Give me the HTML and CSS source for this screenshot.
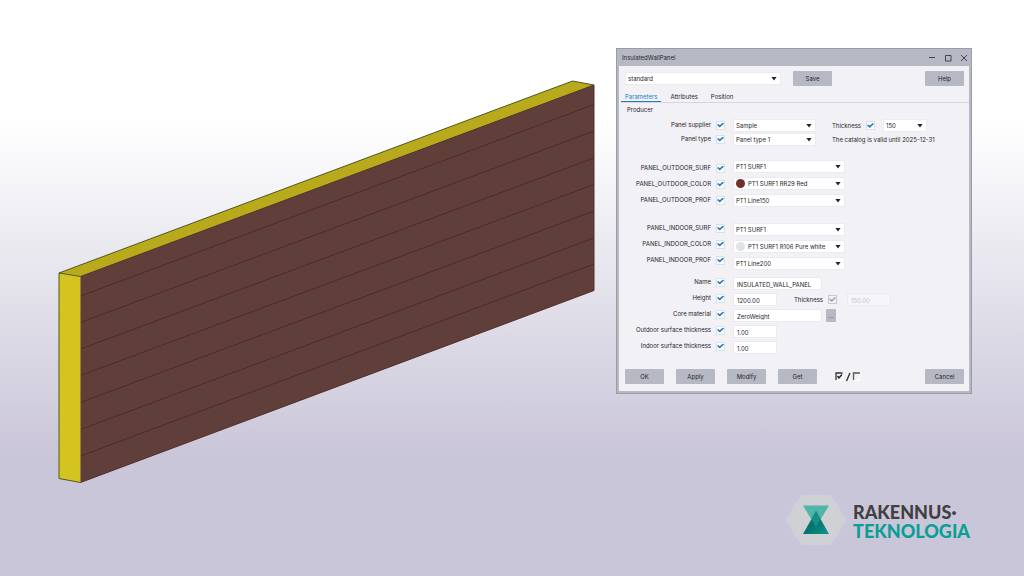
FILE: index.html
```html
<!DOCTYPE html>
<html lang="en">
<head>
<meta charset="utf-8">
<meta name="viewport" content="width=device-width, initial-scale=1">
<title>InsulatedWallPanel</title>
<link rel="stylesheet" href="styles.css">
</head>
<body>
<main class="page">
  <svg class="panel" viewBox="58 80 537 404" role="img" aria-label="Insulated wall panel">
    <path d="M59 273 572.500 81 594 85 80.500 276.500Z" fill="#b9aa1b"/>
    <path d="M59 273 80.500 276.500V482.500L59 478.500Z" fill="#d5c41f"/>
    <path d="M80.500 276.500 594 85V290.500L80.500 482.500Z" fill="#603e39"/>
    <path d="M80.500 296 594 104.500M80.500 322.500 594 131M80.500 349 594 158M80.500 375.500 594 184.500M80.500 402.500 594 211M80.500 429.500 594 238M80.500 456 594 264" fill="none" stroke="#472e2b" stroke-width="1"/>
    <path d="M80.500 482.500 594 290.500V85L80.500 276.500" fill="none" stroke="#54302d" stroke-width="1"/>
    <path d="M80.500 277V482" stroke="#9d7a3c" stroke-width="1"/>
    <path d="M594 85 572.500 81 59 273V478.500L80.500 482.500M59 273 80.500 276.500" fill="none" stroke="#4f5a24" stroke-width="1"/>
  </svg>

  <div class="side">
    <section class="dialog" aria-label="InsulatedWallPanel">
      <header class="titlebar">
        <span>InsulatedWallPanel</span>
        <div class="window-buttons">
          <button type="button" aria-label="Minimize"><svg viewBox="0 0 8 8"><path d="M1 3.500H7"/></svg></button>
          <button type="button" aria-label="Maximize"><svg viewBox="0 0 8 8"><path d="M1.500 1.500H7V7H1.500Z"/></svg></button>
          <button type="button" aria-label="Close"><svg viewBox="0 0 8 8"><path d="M1 1 7 7M7 1 1 7"/></svg></button>
        </div>
      </header>

      <form class="body">
        <div class="toolbar">
          <div class="combo preset"><select aria-label="Preset"><option>standard</option></select></div>
          <button class="btn" type="button">Save</button>
          <button class="btn push" type="button">Help</button>
        </div>

        <nav class="tabs">
          <a class="tab active" href="#parameters">Parameters</a>
          <a class="tab" href="#attributes">Attributes</a>
          <a class="tab" href="#position">Position</a>
        </nav>

        <h2 class="heading">Producer</h2>

        <div class="group producer">
          <div class="keys">
            <label class="key">Panel supplier <input type="checkbox" class="check" checked></label>
            <label class="key">Panel type <input type="checkbox" class="check" checked></label>
          </div>
          <div class="values">
            <div class="line">
              <div class="combo medium"><select aria-label="Panel supplier"><option>Sample</option></select></div>
              <label class="extra">Thickness <input type="checkbox" class="check" checked></label>
              <div class="combo small"><select aria-label="Panel thickness"><option>150</option></select></div>
            </div>
            <div class="line">
              <div class="combo medium"><select aria-label="Panel type"><option>Panel type 1</option></select></div>
              <span class="extra">The catalog is valid until 2025-12-31</span>
            </div>
          </div>
        </div>

        <div class="group outdoor">
          <div class="keys">
            <label class="key">PANEL_OUTDOOR_SURF <input type="checkbox" class="check" checked></label>
            <label class="key">PANEL_OUTDOOR_COLOR <input type="checkbox" class="check" checked></label>
            <label class="key">PANEL_OUTDOOR_PROF <input type="checkbox" class="check" checked></label>
          </div>
          <div class="values">
            <div class="combo large"><select aria-label="Outdoor surface"><option>PT1 SURF1</option></select></div>
            <div class="combo large"><span class="swatch red"></span><select aria-label="Outdoor color"><option>PT1 SURF1 RR29 Red</option></select></div>
            <div class="combo large"><select aria-label="Outdoor profile"><option>PT1 Line150</option></select></div>
          </div>
        </div>

        <div class="group indoor">
          <div class="keys">
            <label class="key">PANEL_INDOOR_SURF <input type="checkbox" class="check" checked></label>
            <label class="key">PANEL_INDOOR_COLOR <input type="checkbox" class="check" checked></label>
            <label class="key">PANEL_INDOOR_PROF <input type="checkbox" class="check" checked></label>
          </div>
          <div class="values">
            <div class="combo large"><select aria-label="Indoor surface"><option>PT1 SURF1</option></select></div>
            <div class="combo large"><span class="swatch white"></span><select aria-label="Indoor color"><option>PT1 SURF1 R106 Pure white</option></select></div>
            <div class="combo large"><select aria-label="Indoor profile"><option>PT1 Line200</option></select></div>
          </div>
        </div>

        <div class="group fields">
          <div class="keys">
            <label class="key">Name <input type="checkbox" class="check" checked></label>
            <label class="key">Height <input type="checkbox" class="check" checked></label>
            <label class="key">Core material <input type="checkbox" class="check" checked></label>
            <label class="key">Outdoor surface thickness <input type="checkbox" class="check" checked></label>
            <label class="key">Indoor surface thickness <input type="checkbox" class="check" checked></label>
          </div>
          <div class="values">
            <input class="text wide" type="text" aria-label="Name" value="INSULATED_WALL_PANEL">
            <div class="line">
              <input class="text" type="text" aria-label="Height" value="1200.00">
              <label class="extra">Thickness <input type="checkbox" class="check" checked disabled></label>
              <input class="text" type="text" aria-label="Thickness" value="150.00" disabled>
            </div>
            <div class="line">
              <input class="text wide" type="text" aria-label="Core material" value="ZeroWeight">
              <button class="btn browse" type="button" aria-label="Browse materials">...</button>
            </div>
            <input class="text" type="text" aria-label="Outdoor surface thickness" value="1.00">
            <input class="text" type="text" aria-label="Indoor surface thickness" value="1.00">
          </div>
        </div>

        <footer class="actions">
          <button class="btn" type="button">OK</button>
          <button class="btn" type="button">Apply</button>
          <button class="btn" type="button">Modify</button>
          <button class="btn" type="button">Get</button>
          <button class="toggle-all" type="button" aria-label="Toggle all">
            <svg viewBox="0 0 26 10">
              <path d="M7.500 1H1V8" fill="none" stroke="#333" stroke-width="1.300"/>
              <path d="M2 8.500H7.500V2" fill="none" stroke="#fff"/>
              <path d="M2.500 4 4 6 7 2.500" fill="none" stroke="#222" stroke-width="1.400"/>
              <path d="M15 1 11.500 9" stroke="#333" stroke-width="1.400"/>
              <path d="M25 1H18.500V8" fill="none" stroke="#555" stroke-width="1.300"/>
              <path d="M19.500 8.500H24.500V2" fill="none" stroke="#fff"/>
            </svg>
          </button>
          <button class="btn push" type="button">Cancel</button>
        </footer>
      </form>
    </section>

    <div class="brand">
      <svg class="brand-mark" viewBox="0 0 60 50" aria-hidden="true">
        <defs>
          <linearGradient id="dark" x1="0" y1="0" x2="1" y2="1">
            <stop offset="0" stop-color="#078c84"/>
            <stop offset=".5" stop-color="#04726d"/>
            <stop offset="1" stop-color="#0b9a90"/>
          </linearGradient>
        </defs>
        <path d="M15 0H45L60 25 45 50H15L0 25Z" fill="#cfd1d4"/>
        <path d="M17 10.500H43L30 32Z" fill="#52b5ad"/>
        <path d="M30 16 43 39H17Z" fill="url(#dark)"/>
        <path d="M30 16 34.500 24.500 30 32 25.500 24.500Z" fill="#158f87"/>
      </svg>
      <div class="brand-name"><span>RAKENNUS·</span><span class="accent">TEKNOLOGIA</span></div>
    </div>
  </div>
</main>
</body>
</html>
```
FILE: styles.css
```css
* {
  box-sizing: border-box;
}

body {
  margin: 0;
  background: #cac6d9;
  font-family: Inter, "Open Sans", sans-serif;
  font-size: 6px;
  line-height: 8px;
  font-weight: 400;
  color: #24252b;
}

button,
input,
select {
  margin: 0;
  padding: 0;
  border: 0;
  border-radius: 0;
  background: none;
  font: inherit;
  color: inherit;
  appearance: none;
}

.page {
  display: grid;
  grid-template-columns: minmax(0, 537fr) minmax(0, 356fr);
  gap: 21px;
  min-height: 100vh;
  padding: 48px 52px 31px 58px;
  background: linear-gradient(#fff 21%, #e4e2eb 50%, #cac6d9 79%);
}

.panel {
  display: block;
  width: 100%;
  margin-top: 32px;
}

.side {
  display: flex;
  flex-direction: column;
  justify-content: space-between;
  gap: 24px;
}

.dialog {
  border: 3px solid #b6b9c3;
  border-top: 0;
  outline: 1px solid #9a9ca8;
  outline-offset: -1px;
  background: #f2f1f6;
}

.titlebar {
  display: flex;
  align-items: center;
  justify-content: space-between;
  height: 18px;
  padding: 1px 1px 0 3px;
  background: #b6b9c3;
}

.window-buttons {
  display: flex;
  gap: 8px;
}

.window-buttons button {
  width: 8px;
  height: 8px;
}

.window-buttons svg {
  display: block;
  fill: none;
  stroke: #44464d;
}

.body {
  padding: 5px 5px 7px 6px;
}

.toolbar,
.actions {
  display: flex;
  align-items: center;
  gap: 12px;
}

.btn {
  width: 39px;
  height: 15px;
  border-radius: 1px;
  background: #b6b9c3;
  text-align: center;
}

.push {
  margin-left: auto;
}

.combo {
  position: relative;
  display: flex;
  align-items: center;
  height: 13px;
  border: 1px solid #ebebef;
  background: #fff;
}

.combo select {
  flex: 1;
  min-width: 0;
  height: 100%;
  padding-left: 2px;
}

.combo::after {
  content: "";
  position: absolute;
  right: 3px;
  width: 6px;
  height: 4px;
  background: #22242a;
  clip-path: polygon(0 0, 100% 0, 50% 100%);
  pointer-events: none;
}

.preset {
  width: 156px;
}

.small {
  width: 44px;
}

.medium {
  width: 83px;
}

.large {
  width: 112px;
}

.swatch {
  width: 9px;
  height: 9px;
  margin: 0 1px 0 2px;
  border-radius: 50%;
}

.red {
  background: #6d302c;
}

.white {
  background: #dfe5e3;
}

.tabs {
  display: flex;
  gap: 5px;
  margin: 7px -5px 0 -4px;
  border-bottom: 1px solid #d6d7de;
}

.tab {
  padding: 0 4px;
  color: inherit;
  text-decoration: none;
  border-bottom: 1px solid transparent;
}

.active {
  color: #1b7fc0;
  border-color: #1b7fc0;
}

.heading {
  margin: 3px 0 0 2px;
  font-size: 6px;
  font-weight: 400;
}

.group {
  display: grid;
  grid-template-columns: 100px 1fr;
  gap: 8px;
}

.keys,
.values {
  display: flex;
  flex-direction: column;
}

.keys {
  gap: 6px;
}

.key,
.extra {
  display: flex;
  align-items: center;
  gap: 5px;
}

.key {
  justify-content: flex-end;
  height: 10px;
  white-space: nowrap;
}

.line {
  display: flex;
  align-items: center;
}

.extra {
  margin-left: 16px;
  white-space: nowrap;
}

.extra + .combo {
  margin-left: 8px;
}

.check {
  display: grid;
  place-items: center;
  flex: none;
  width: 9px;
  height: 9px;
  border: 1px solid #dfe0e6;
  background: #fff;
}

.check::after {
  content: "";
  width: 7px;
  height: 5px;
  background: #1b7fc0;
  clip-path: polygon(0 50%, 18% 30%, 40% 55%, 82% 0, 100% 20%, 40% 100%);
}

.check:disabled {
  border-color: #c9cad0;
  background: #f2f1f6;
}

.check:disabled::after {
  background: #a5a6ac;
}

.text {
  width: 44px;
  height: 13px;
  padding: 1px 3px 0;
  border: 1px solid #ebebef;
  background: #fff;
}

.text:disabled {
  background: #f6f5f9;
  color: #c6c6cc;
}

.wide {
  width: 89px;
}

.producer {
  margin-top: 5px;
}

.producer .keys {
  gap: 4px;
  padding-top: 1px;
}

.producer .values {
  gap: 1px;
}

.outdoor {
  margin-top: 14px;
}

.outdoor .values,
.indoor .values {
  gap: 4px;
}

.outdoor .keys {
  padding-top: 3px;
}

.indoor {
  margin-top: 16px;
}

.fields {
  margin-top: 7px;
}

.fields .values {
  gap: 3px;
}

.fields .extra {
  margin: 0 10px 0 17px;
}

.browse {
  width: 10px;
  height: 13px;
  margin-left: 4px;
}

.actions {
  margin-top: 15px;
}

.toggle-all {
  width: 26px;
  height: 10px;
  margin-left: 6px;
}

.toggle-all svg {
  display: block;
}

.brand {
  display: flex;
  align-items: center;
  align-self: flex-end;
  gap: 7px;
  margin-right: 2px;
}

.brand-mark {
  width: 60px;
  height: 50px;
}

.brand-name {
  display: flex;
  flex-direction: column;
  padding-top: 3px;
  font-family: Lato, sans-serif;
  font-size: 18px;
  line-height: 19px;
  font-weight: 900;
  color: #414042;
}

.accent {
  color: #0a9f95;
}
```
